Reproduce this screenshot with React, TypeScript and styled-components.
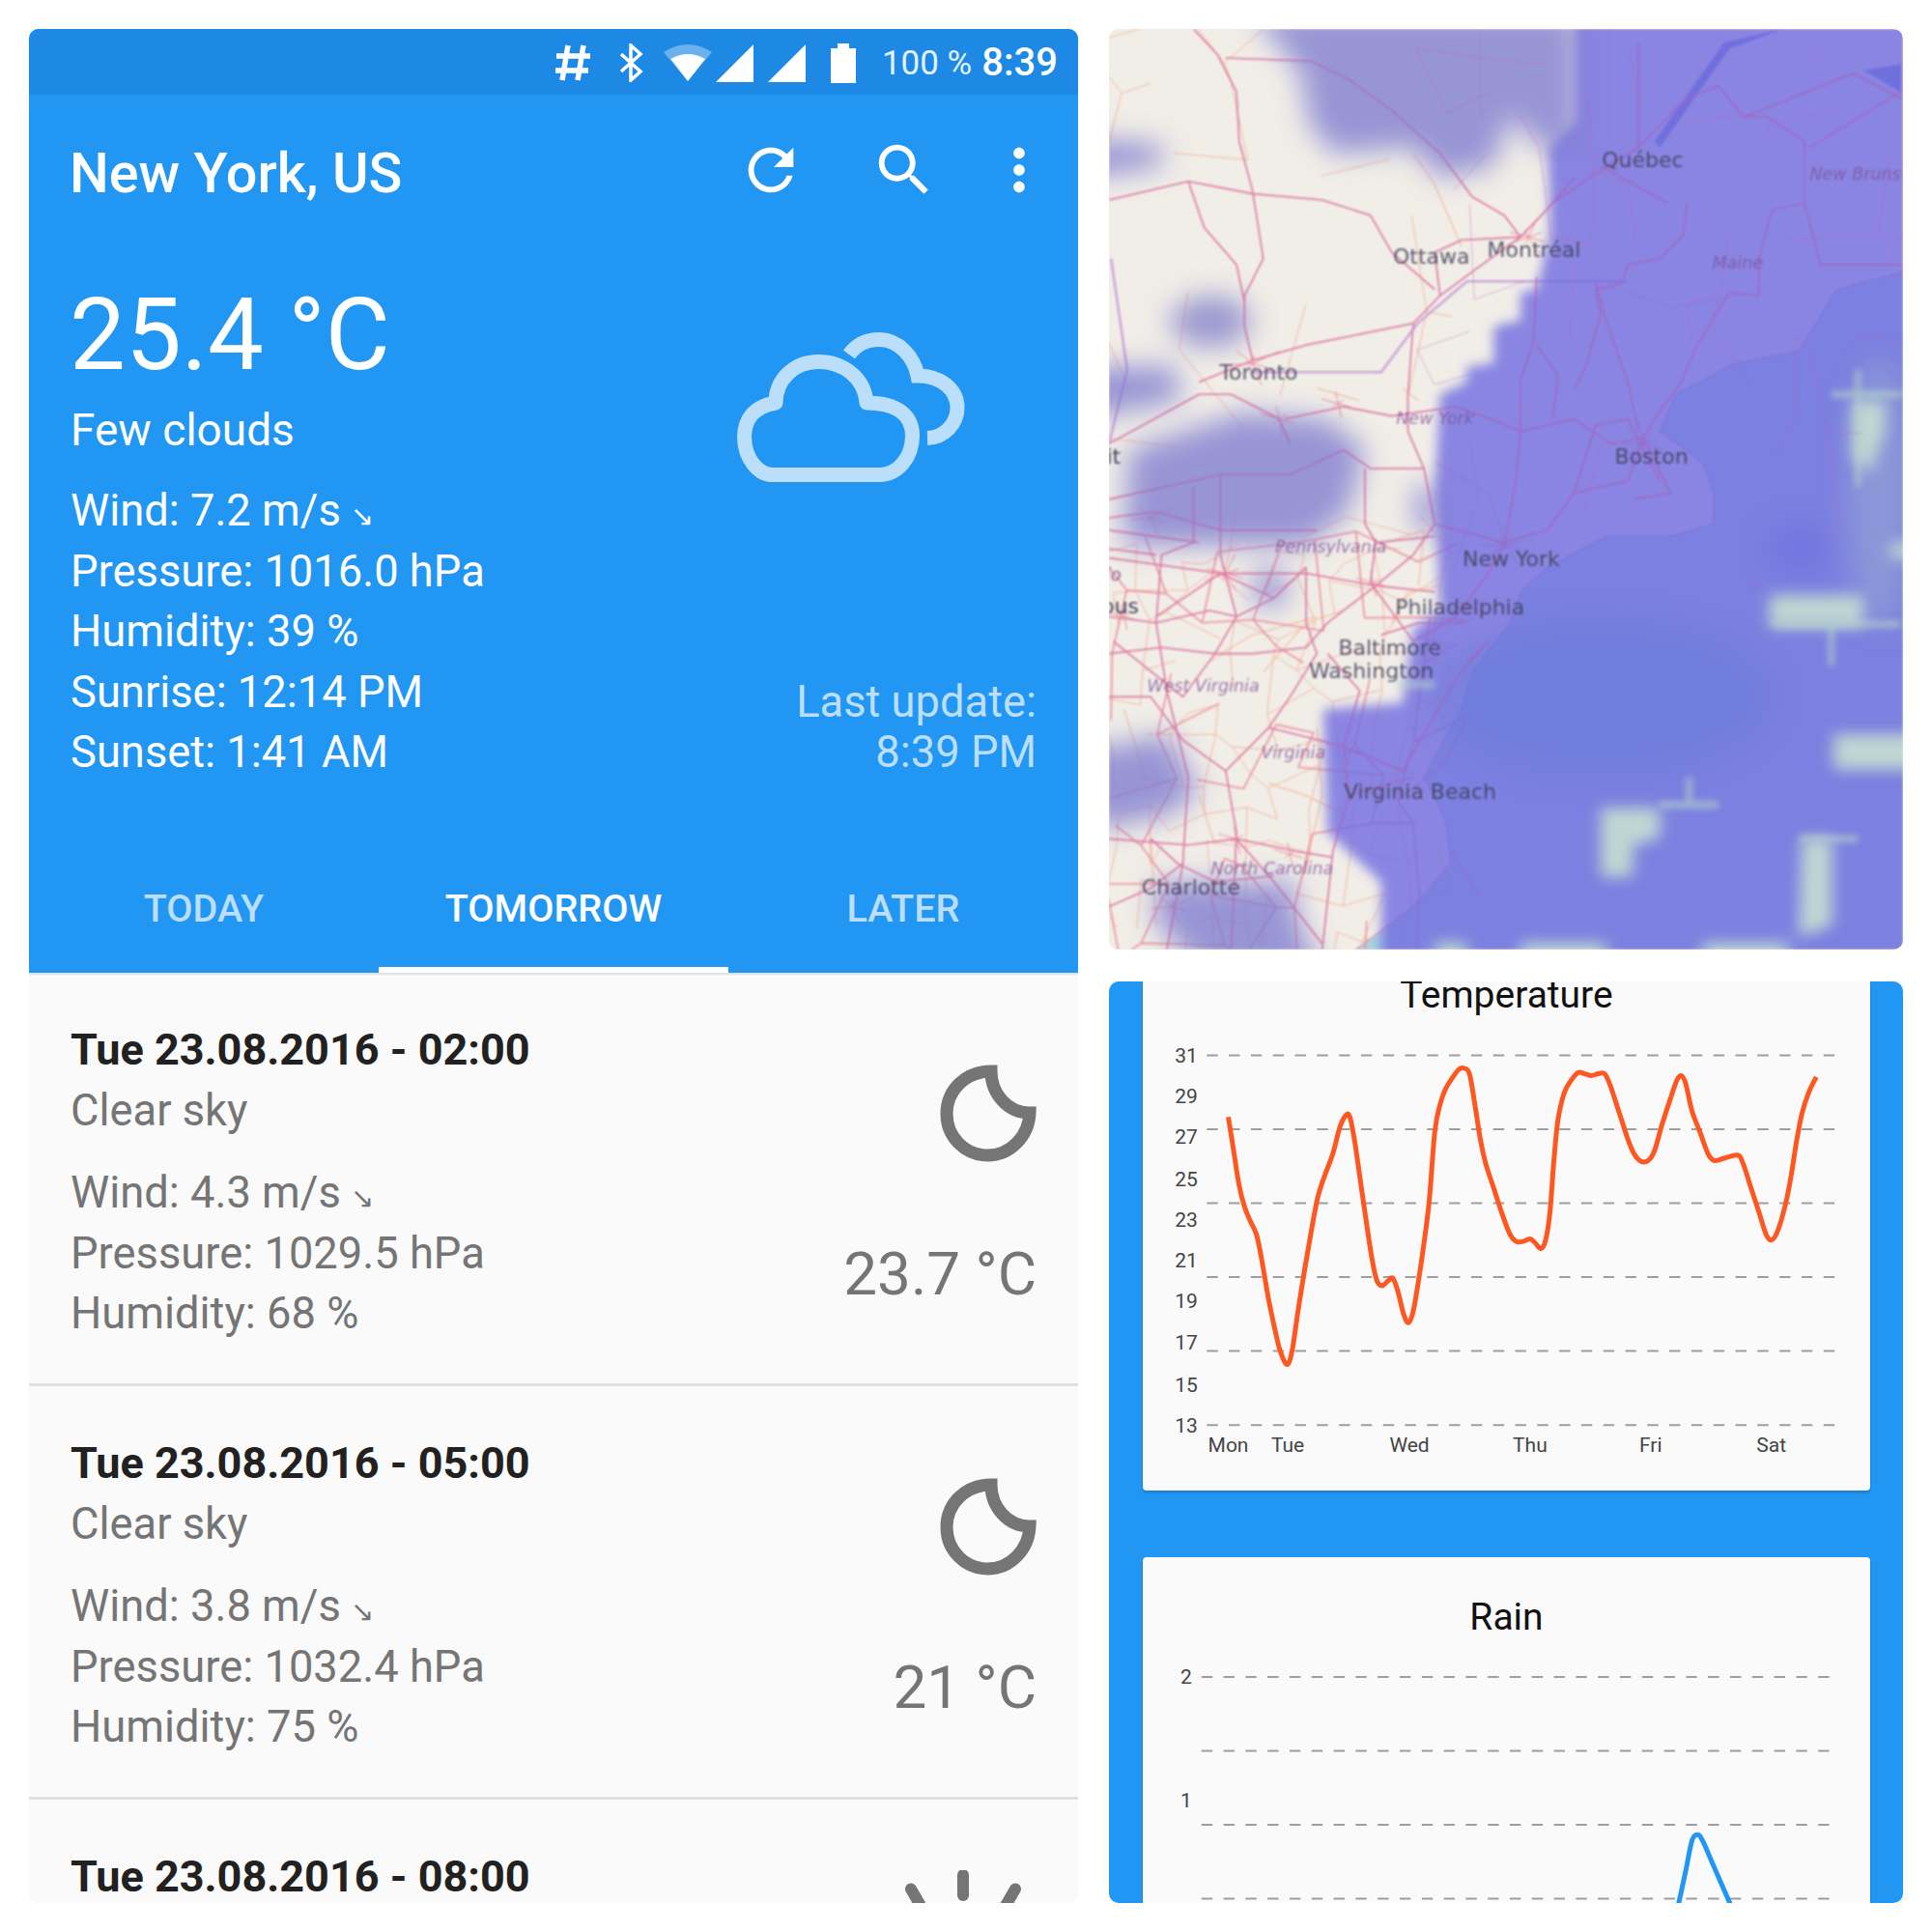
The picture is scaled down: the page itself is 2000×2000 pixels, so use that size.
import React from "react";
import styled, { createGlobalStyle } from "styled-components";

const Global = createGlobalStyle`
  html, body { margin: 0; padding: 0; background: #fff; }
  body { font-family: Roboto, "Liberation Sans", sans-serif; }
`;

const Page = styled.div`
  width: 2000px;
  height: 2000px;
  padding: 30px;
  box-sizing: border-box;
  display: grid;
  grid-template-columns: 1086px 822px;
  column-gap: 32px;
  background: #fff;
`;

const Phone = styled.section`
  height: 1940px;
  border-radius: 10px;
  overflow: hidden;
  background: #fafafa;
  display: flex;
  flex-direction: column;
`;

const Header = styled.header`
  background: #2196f3;
  color: #fff;
  flex: none;
`;

const StatusBar = styled.div`
  height: 68px;
  box-sizing: border-box;
  padding: 2px 21px 0 0;
  background: #1e88e5;
  display: flex;
  align-items: center;
  justify-content: flex-end;
`;

const StatusIcon = styled.svg<{ $gap: number }>`
  display: block;
  margin-right: ${(p) => p.$gap}px;
  fill: #fff;
  flex: none;
`;

const Battery = styled.span`
  font-size: 35px;
  color: #e3f2fd;
  margin-right: 10px;
  line-height: 1;
`;

const Clock = styled.span`
  font-size: 40px;
  font-weight: 500;
  line-height: 1;
`;

const AppBar = styled.div`
  height: 160px;
  display: flex;
  align-items: center;
  padding: 0 26px 0 42px;
`;

const Title = styled.h1`
  margin: 4px 0 0;
  font-size: 57.5px;
  font-weight: 500;
  line-height: 1;
  flex: 1;
`;

const ActionIcon = styled.svg<{ $gap: number }>`
  width: 70px;
  height: 70px;
  fill: #fff;
  display: block;
  margin: 0 0 4px ${(p) => p.$gap}px;
  flex: none;
`;

const Hero = styled.div`
  height: 613px;
  box-sizing: border-box;
  padding: 29px 43px 0;
  display: flex;
  justify-content: space-between;
`;

const Current = styled.div`
  display: flex;
  flex-direction: column;
`;

const BigTemp = styled.div`
  font-size: 103px;
  line-height: 120px;
  margin-left: -1px;
`;

const Condition = styled.div`
  font-size: 46px;
  line-height: 62px;
  margin: 7px 0 22px;
`;

const InfoLine = styled.div`
  font-size: 45.3px;
  line-height: 62.5px;
  white-space: nowrap;
`;

const Arrow = styled.span`
  font-family: "DejaVu Sans", sans-serif;
  font-size: 29px;
  line-height: 0;
  margin-left: 10px;
`;

const Side = styled.div`
  display: flex;
  flex-direction: column;
  align-items: flex-end;
`;

const CloudIcon = styled.svg`
  display: block;
  margin: 57px 74px 0 0;
`;

const Updated = styled.div`
  margin-top: 201.5px;
  color: #bbdefb;
  font-size: 45.3px;
  line-height: 52px;
  text-align: right;
`;

const Tabs = styled.nav`
  display: grid;
  grid-template-columns: repeat(3, 1fr);
  height: 136px;
`;

const Tab = styled.div<{ $active?: boolean }>`
  display: flex;
  align-items: center;
  justify-content: center;
  padding-top: 9px;
  font-size: 39.6px;
  font-weight: 500;
  color: ${(p) => (p.$active ? "#fff" : "#bbdefb")};
  border-bottom: 6px solid ${(p) => (p.$active ? "#fff" : "transparent")};
`;

const List = styled.div`
  flex: 1;
  min-height: 0;
  overflow: hidden;
  box-shadow: inset 0 3px 2px -1px #e0e0e0;
`;

const Row = styled.article`
  height: 428px;
  box-sizing: border-box;
  padding: 49px 43px 0;
  display: flex;
  justify-content: space-between;
  border-bottom: 3px solid #e0e0e0;
  color: #757575;
`;

const RowText = styled.div`
  display: flex;
  flex-direction: column;
`;

const RowTitle = styled.div`
  font-size: 45px;
  line-height: 62.5px;
  font-weight: 700;
  color: #212121;
  white-space: nowrap;
`;

const RowDesc = styled.div`
  font-size: 45.3px;
  line-height: 62.5px;
  margin-bottom: 23px;
`;

const RowSide = styled.div`
  display: flex;
  flex-direction: column;
  align-items: flex-end;
`;

const MoonIcon = styled.svg`
  display: block;
  margin-top: 46px;
`;

const SunIcon = styled.svg`
  display: block;
  margin: 24px 11px 0 0;
`;

const RowTemp = styled.div`
  font-size: 62px;
  line-height: 72px;
  margin-top: 79px;
  white-space: nowrap;
`;

const MapPanel = styled.div`
  height: 953px;
  border-radius: 10px;
  overflow: hidden;
  background: #f1eee8;
`;

const MapSvg = styled.svg`
  display: block;
  filter: blur(0.85px);
`;

const ChartsPanel = styled.div`
  height: 954px;
  margin-top: 33px;
  border-radius: 10px;
  overflow: hidden;
  background: #2196f3;
  padding: 0 34px 0 35px;
  box-sizing: border-box;
  display: flex;
  flex-direction: column;
  gap: 69px;
`;

const Card = styled.div<{ $height: number; $pad: number }>`
  flex: none;
  height: ${(p) => p.$height}px;
  padding-top: ${(p) => p.$pad}px;
  box-sizing: border-box;
  background: #fafafa;
  border-radius: 0 0 4px 4px;
  box-shadow: 0 2px 3px rgba(0, 0, 0, 0.2);
  &:last-child { border-radius: 4px; }
`;

const CardTitle = styled.div`
  font-size: 39px;
  line-height: 27px;
  padding: 1px 0 22px;
  text-align: center;
  color: #111;
`;

const ChartSvg = styled.svg`
  display: block;
  font-family: Roboto, sans-serif;
`;

const hashPaths = "M14 1 L8 37 M30 1 L24 37 M2 12 H37 M1 27 H35";

function StatusBarIcons() {
  return (
    <>
      <StatusIcon $gap={29} width={38} height={38} viewBox="0 0 38 38">
        <path d={hashPaths} stroke="#fff" strokeWidth={5.5} fill="none" />
      </StatusIcon>
      <StatusIcon $gap={21} width={25} height={40} viewBox="0 0 25 40">
        <path d="M2 11 L22 29 L12 38 V2 L22 11 L2 29" stroke="#fff" strokeWidth={3.5} fill="none" />
      </StatusIcon>
      <StatusIcon $gap={4} width={50} height={38} viewBox="0 0 50 38">
        <path d="M0 8 Q25 -8 50 8 L25 38Z" fill="#fff" opacity={0.35} />
        <path d="M7.4 15 Q25 5 43 15 L25 38Z" fill="#fff" />
      </StatusIcon>
      <StatusIcon $gap={14} width={40} height={39} viewBox="0 0 40 39">
        <path d="M0 39 L39 0 V39Z" />
      </StatusIcon>
      <StatusIcon $gap={25} width={40} height={39} viewBox="0 0 40 39">
        <path d="M0 39 L39 0 V39Z" />
      </StatusIcon>
      <StatusIcon $gap={27} width={26} height={41} viewBox="0 0 26 41">
        <path d="M7 0 H19 V5 H26 V41 H0 V5 H7Z" />
      </StatusIcon>
    </>
  );
}

const forecast = [
  { time: "Tue 23.08.2016 - 02:00", desc: "Clear sky", wind: "4.3", pressure: "1029.5", humidity: "68", temp: "23.7 °C" },
  { time: "Tue 23.08.2016 - 05:00", desc: "Clear sky", wind: "3.8", pressure: "1032.4", humidity: "75", temp: "21 °C" },
];

function Moon() {
  return (
    <MoonIcon width={100} height={102} viewBox="0 0 100 102">
      <path
        d="M53 7 C53 30 70 50 93 50 C92 74 73 94 49.5 94 C26 94 7 75 7 51 C7 27 26 7 53 7 Z"
        fill="none"
        stroke="#757575"
        strokeWidth={13}
        strokeLinejoin="miter"
        strokeMiterlimit={3}
      />
    </MoonIcon>
  );
}

function Sun() {
  return (
    <SunIcon width={130} height={60} viewBox="0 0 130 60">
      {[-30, 0, 30].map((a) => (
        <line key={a} x1={65} y1={5} x2={65} y2={26} stroke="#757575" strokeWidth={12} strokeLinecap="round" transform={`rotate(${a} 65 113)`} />
      ))}
    </SunIcon>
  );
}

// Map drawing: coordinates are taken in a stretched working space and mapped to the 822x953 tile.
const SX = 1 / 1.803;
const SY = 1 / 1.565;
const mx = (z: number) => (z - 32) * SX;
const my = (z: number) => (z - 48) * SY;

const mainRoads = [
  "M190 48 L235 90 L270 150 L275 230 L300 310 L320 420 L285 480 L285 530 L300 585",
  "M32 325 L180 295 L300 315 L430 325 L520 350 L560 410 L640 470",
  "M180 295 L210 370 L270 430 L285 490",
  "M200 620 L300 585 L400 560 L600 525 L650 480 L720 435 L800 385 L850 340 L900 290",
  "M600 525 L590 640 L590 700 L620 760 L640 850 L600 900 L530 950",
  "M32 720 L200 640 L260 640 L350 680 L370 720",
  "M360 680 L470 660 L560 675 L680 660 L760 685 L800 700 L790 790 L770 880",
  "M800 385 L770 350 L710 320 L650 250 L560 180 L480 130 L410 100 L250 95",
  "M800 385 L690 390 L640 410 L650 480",
  "M860 330 L960 270 L1020 240 L1110 160 L1170 140 L1215 190 L1260 190 L1330 230 L1330 330 L1270 340 L1245 420 L1245 480 L1190 475 L1130 560 L1100 620 L1050 680 L1030 710",
  "M950 270 L1075 330",
  "M1020 70 L1020 240",
  "M1110 330 L1105 380 L1060 420 L1000 430 L990 460 L940 470 L950 510 L920 600 L900 630",
  "M940 460 L960 520 L1000 620 L1020 700",
  "M830 450 L825 550 L800 620 L800 700",
  "M1030 710 L1000 780 L900 800 L850 860 L770 880 L740 930 L680 1000 L600 1040 L520 945",
  "M1030 710 L1080 800 L1010 810",
  "M1330 330 L1360 430 L1510 430",
  "M1340 240 L1510 150",
  "M1220 190 L1420 120 L1510 160",
  "M800 700 L900 680 L970 720 L1030 710",
  "M620 760 L520 760 L470 730 L370 770 L240 770 L32 810",
  "M510 760 L510 850 L530 880",
  "M32 840 L120 830 L240 860 L420 860",
  "M32 860 L200 880",
  "M190 790 L190 880 L130 900 L120 1010 L140 1120 L180 1260 L170 1400 L140 1540",
  "M240 770 L240 900 L270 1000 L230 1060 L170 1130 L40 1040",
  "M32 905 L240 930 L400 930 L530 950 L640 960",
  "M120 1000 L240 930 L290 950 L340 970 L400 920",
  "M32 1060 L130 1050 L230 1060 L300 1060 L400 1050 L440 1010 L530 950",
  "M400 920 L400 1010 L420 1060 L370 1130 L330 1180 L250 1250 L270 1350 L260 1540",
  "M440 1060 L500 1120 L470 1210 L480 1290 L450 1380 L430 1540",
  "M520 945 L530 880 L640 870",
  "M32 1130 L110 1130 L170 1200 L250 1250",
  "M32 1360 L180 1370 L270 1360 L380 1380 L450 1390",
  "M110 1360 L160 1400 L230 1430 L340 1420",
  "M32 1470 L110 1440 L170 1400",
  "M270 1360 L340 1430 L430 1530",
  "M330 1180 L470 1210 L580 1250 L620 1190",
  "M620 1190 L680 1100 L740 1040 L700 1075",
  "M540 1030 L610 1010 L700 1010",
  "M480 1290 L560 1270 L600 1260",
  "M32 1000 L120 1010 L220 990 L270 1000 L340 970",
  "M120 900 L32 890",
  "M640 850 L770 880",
  "M900 800 L940 690 L1000 680 L1060 780",
  "M830 560 L870 610 L860 680",
];

const minorRoads = [
  "M240 1060 L300 1030 L420 1000",
  "M320 1090 L400 1010 L470 990",
  "M110 1360 L120 1500",
  "M200 1290 L230 1370",
  "M60 1150 L100 1260",
  "M330 1270 L400 1290 L470 1320",
  "M420 1180 L430 1290 L400 1400",
  "M560 1010 L590 960 L650 950",
  "M550 880 L620 860 L610 950",
  "M580 630 L610 650",
  "M420 630 L500 650",
  "M600 250 L640 300 L690 400",
  "M990 470 L1080 500 L1200 480",
  "M640 750 L740 800 L760 850",
];

// Deterministic fine road network: jittered grid, links kept with a given probability.
function roadMesh(x0: number, x1: number, y0: number, y1: number, step: number, keep: number, seed: number) {
  let s = seed;
  const rnd = () => {
    s = (s * 16807) % 2147483647;
    return s / 2147483647;
  };
  const nx = Math.ceil((x1 - x0) / step);
  const ny = Math.ceil((y1 - y0) / step);
  const pts: [number, number][][] = [];
  for (let i = 0; i <= nx; i++) {
    pts[i] = [];
    for (let j = 0; j <= ny; j++) {
      pts[i][j] = [
        Math.round(x0 + i * step + (rnd() - 0.5) * step * 0.8),
        Math.round(y0 + j * step + (rnd() - 0.5) * step * 0.8),
      ];
    }
  }
  let d = "";
  for (let i = 0; i <= nx; i++) {
    for (let j = 0; j <= ny; j++) {
      const p = pts[i][j];
      if (i < nx && rnd() < keep) d += `M${p[0]} ${p[1]}L${pts[i + 1][j][0]} ${pts[i + 1][j][1]}`;
      if (j < ny && rnd() < keep) d += `M${p[0]} ${p[1]}L${pts[i][j + 1][0]} ${pts[i][j + 1][1]}`;
    }
  }
  return d;
}

function cityStar(x: number, y: number, r: number, n: number) {
  let d = "";
  for (let i = 0; i < n; i++) {
    const a = (i / n) * Math.PI * 2 + 0.35;
    const l = r * (0.65 + 0.35 * Math.sin(i * 2.3));
    d += `M${x} ${y}L${(x + Math.cos(a) * l * 1.5).toFixed(0)} ${(y + Math.sin(a) * l).toFixed(0)}`;
  }
  return d;
}

const meshSouth = roadMesh(32, 640, 890, 1540, 62, 0.62, 4711);
const meshSouthMajor = roadMesh(32, 640, 890, 1540, 95, 0.55, 33);
const meshNorth = roadMesh(640, 1510, 90, 880, 92, 0.28, 991);
const meshWest = roadMesh(32, 640, 60, 880, 110, 0.18, 271);
const stars = [
  [300, 590, 40, 7], [815, 385, 34, 8], [1030, 720, 38, 9], [770, 885, 42, 9], [700, 985, 28, 7],
  [640, 1040, 26, 6], [250, 930, 34, 8], [110, 840, 30, 7], [60, 1000, 24, 6], [150, 1470, 30, 7],
  [270, 1360, 28, 6], [370, 1385, 26, 6], [350, 680, 30, 6], [460, 655, 26, 6], [525, 945, 26, 6], [480, 1218, 20, 5],
]
  .map((s) => cityStar(s[0], s[1], s[2], s[3]))
  .join("");

const water = "M1520 440 L1390 470 L1320 570 L1200 590 L1090 640 L1060 700 L1140 750 L1160 800 L1160 850 L1080 870 L960 870 L850 920 L800 960 L780 1010 L710 1090 L690 1150 L620 1260 L660 1330 L670 1400 L600 1470 L460 1560 L1520 1560 Z";
const stLawrence = "M1060 240 L1190 80 L1290 48 L1180 70 L1050 230 Z";
const lakeRegions = "M1510 105 L1440 115 L1510 150 Z";

const mainCloud = "M900 20 L1560 20 L1560 1580 L540 1580 L540 1430 L440 1350 L432 1150 L580 1140 L600 1020 L650 990 L640 800 L650 640 L700 620 L700 595 L750 590 L750 530 L800 520 L800 475 L830 470 L855 380 L852 240 L900 200 Z";
const greyClouds = [
  "M300 20 L910 20 L910 240 L852 250 L780 190 L750 270 L650 290 L600 240 L450 250 L405 200 L390 120 Z",
  "M70 730 L280 670 L440 680 L510 730 L480 830 L400 885 L60 885 Z",
  "M-10 595 L155 595 L165 650 L-10 680 Z",
  "M-10 225 L130 235 L130 270 L-10 290 Z",
  "M40 1210 L140 1190 L200 1280 L150 1320 L40 1340 L-10 1340 L-10 1210 Z",
  "M120 1430 L380 1430 L380 1480 L430 1580 L220 1580 L120 1500 Z",
  "M300 930 L350 920 L370 970 L310 990 Z",
  "M600 790 L650 790 L650 860 L610 870 Z",
];
const gaps = [
  "M950 1310 L1060 1310 L1060 1360 L1010 1370 L1010 1422 L950 1422 Z",
  "M1325 1360 L1382 1360 L1382 1500 L1320 1520 Z",
  "M1265 965 L1440 965 L1440 1018 L1265 1018 Z",
  "M1385 1190 L1560 1190 L1560 1248 L1385 1248 Z",
  "M1420 650 L1480 650 L1480 700 L1450 770 L1420 740 Z",
  "M1490 880 L1560 880 L1560 905 L1490 905 Z",
  "M640 1528 L700 1528 L700 1580 L640 1580 Z",
  "M800 1528 L960 1528 L960 1580 L800 1580 Z",
  "M1140 1528 L1300 1528 L1300 1580 L1140 1580 Z",
];
const gapArms = "M1060 1305 H1170 M1115 1260 V1310 M1270 1012 H1510 M1380 1012 V1080 M1380 640 H1514 M1430 600 V790 M1320 1360 H1430 M570 1110 H640";

const cities = [
  { t: "Ottawa", x: 562, y: 428 },
  { t: "Montréal", x: 738, y: 418 },
  { t: "Québec", x: 952, y: 272 },
  { t: "Toronto", x: 238, y: 616 },
  { t: "Boston", x: 976, y: 752 },
  { t: "New York", x: 692, y: 918 },
  { t: "Philadelphia", x: 566, y: 996 },
  { t: "Baltimore", x: 460, y: 1062 },
  { t: "Washington", x: 405, y: 1100 },
  { t: "Virginia Beach", x: 470, y: 1296 },
  { t: "Charlotte", x: 93, y: 1450 },
];
const cut = [
  { t: "Detroit", x: 54, y: 752, city: true },
  { t: "Columbus", x: 88, y: 995, city: true },
  { t: "Ohio", x: 55, y: 942, city: false },
];
const regions = [
  { t: "New Brunswick", x: 1340, y: 292 },
  { t: "Maine", x: 1158, y: 436 },
  { t: "New York", x: 568, y: 688 },
  { t: "Pennsylvania", x: 342, y: 896 },
  { t: "West Virginia", x: 103, y: 1122 },
  { t: "Virginia", x: 316, y: 1230 },
  { t: "North Carolina", x: 222, y: 1418 },
];

function WeatherMap() {
  const zoomSpace = `scale(${SX} ${SY}) translate(-32 -48)`;
  return (
    <MapSvg width={822} height={953} viewBox="0 0 822 953" fontFamily="'DejaVu Sans', sans-serif">
      <defs>
        <filter id="wide" filterUnits="userSpaceOnUse" x="-200" y="-200" width="2200" height="2200">
          <feGaussianBlur stdDeviation="26 22" />
        </filter>
        <filter id="soft" filterUnits="userSpaceOnUse" x="-200" y="-200" width="2200" height="2200">
          <feGaussianBlur stdDeviation="11 9" />
        </filter>
        <filter id="softer" filterUnits="userSpaceOnUse" x="-200" y="-200" width="2200" height="2200">
          <feGaussianBlur stdDeviation="14 12" />
        </filter>
        <filter id="thin" filterUnits="userSpaceOnUse" x="-200" y="-200" width="2200" height="2200">
          <feGaussianBlur stdDeviation="6 5" />
        </filter>
      </defs>
      <rect width={822} height={953} fill="#f1eee8" />
      <g transform={zoomSpace}>
        <path d={water} fill="#aad3df" />
        <path d={stLawrence} fill="#6f7fd8" />
        <path d={lakeRegions} fill="#6f7fd8" />
        <path d={water} fill="none" stroke="#c06fc0" strokeWidth={1.5} vectorEffect="non-scaling-stroke" opacity={0.5} />
        <g fill="none" stroke="#f4b79f" strokeWidth={1}>
          <path d={meshSouth} vectorEffect="non-scaling-stroke" />
          <path d={meshWest} vectorEffect="non-scaling-stroke" />
        </g>
        <g fill="none" stroke="#f3bd9a" strokeWidth={1.2}>
          {minorRoads.map((d) => (
            <path key={d} d={d} vectorEffect="non-scaling-stroke" />
          ))}
        </g>
        <g fill="none" stroke="#ee8f9a" strokeWidth={1.6} strokeLinejoin="round">
          {mainRoads.map((d) => (
            <path key={d} d={d} vectorEffect="non-scaling-stroke" />
          ))}
          <path d={stars} strokeWidth={1} vectorEffect="non-scaling-stroke" />
          <path d={meshSouthMajor} vectorEffect="non-scaling-stroke" />
        </g>
        <path d="M295 604 H540 L608 525 L700 457 H1000" fill="none" stroke="#cda4d8" strokeWidth={2.5} vectorEffect="non-scaling-stroke" />
        <path d="M36 420 L66 600 L32 720" fill="none" stroke="#cda4d8" strokeWidth={2.5} vectorEffect="non-scaling-stroke" />
        <g filter="url(#soft)">
          <path d={mainCloud} fill="#6f6be0" opacity={0.8} />
        </g>
        <g filter="url(#wide)">
          {greyClouds.map((d) => (
            <path key={d} d={d} fill="#7f7cd0" opacity={0.78} />
          ))}
          <ellipse cx={222} cy={522} rx={75} ry={42} fill="#7f7cc8" opacity={0.75} />
          <ellipse cx={1320} cy={890} rx={60} ry={40} fill="#6a6cde" opacity={0.5} />
          <ellipse cx={1470} cy={800} rx={60} ry={220} fill="#a8c4cc" opacity={0.35} />
          <ellipse cx={950} cy={1130} rx={320} ry={130} fill="#5f78d6" opacity={0.35} />
        </g>
        <g filter="url(#softer)">
          {gaps.map((d) => (
            <path key={d} d={d} fill="#c6e0d0" opacity={0.9} />
          ))}
        </g>
        <g filter="url(#thin)">
          <path d={gapArms} fill="none" stroke="#b6d6cc" strokeWidth={12} opacity={0.6} />
        </g>
        <g fill="none" stroke="#c45fb6" strokeWidth={1.5} opacity={0.42}>
          {mainRoads.map((d) => (
            <path key={d} d={d} vectorEffect="non-scaling-stroke" />
          ))}
          <path d={meshNorth} strokeWidth={1} vectorEffect="non-scaling-stroke" />
        </g>
      </g>
      {cities.map((c) => (
        <text key={c.t} x={mx(c.x)} y={my(c.y)} fontSize={22} fill="#3f3f5a" opacity={0.85}>
          {c.t}
        </text>
      ))}
      {cut.map((c) => (
        <text
          key={c.t}
          x={mx(c.x)}
          y={my(c.y)}
          textAnchor="end"
          fontSize={c.city ? 22 : 18}
          fontStyle={c.city ? "normal" : "italic"}
          fill={c.city ? "#3f3f5a" : "#8a5a9a"}
        >
          {c.t}
        </text>
      ))}
      {regions.map((c) => (
        <text key={c.t + c.x} x={mx(c.x)} y={my(c.y)} fontSize={17.5} fontStyle="italic" fill="#7f4f96" opacity={0.75}>
          {c.t}
        </text>
      ))}
    </MapSvg>
  );
}

const tempPoints: [number, number][] = [
  [255, 245], [265, 300], [275, 355], [285, 390], [295, 412], [308, 437], [318, 480], [330, 540], [342, 590], [352, 625],
  [365, 647], [375, 620], [385, 560], [398, 490], [410, 430], [422, 375], [435, 340], [450, 305], [462, 265], [472, 245],
  [481, 243], [490, 280], [500, 340], [510, 400], [522, 470], [532, 510], [542, 519], [552, 512], [562, 507], [572, 530],
  [582, 565], [591, 579], [600, 560], [610, 510], [620, 450], [630, 380], [640, 270], [650, 225], [660, 200], [672, 183],
  [685, 168], [695, 166], [705, 175], [715, 225], [725, 280], [735, 320], [750, 360], [765, 400], [780, 435], [792, 447],
  [805, 447], [818, 443], [828, 450], [838, 459], [847, 445], [855, 400], [862, 320], [870, 250], [882, 205], [895, 185],
  [908, 173], [920, 175], [932, 178], [945, 175], [957, 175], [968, 195], [985, 240], [1000, 280], [1012, 305], [1025, 317],
  [1038, 316], [1050, 300], [1065, 255], [1080, 215], [1092, 185], [1100, 178], [1108, 190], [1120, 235], [1135, 270], [1150, 305],
  [1162, 316], [1180, 312], [1205, 307], [1215, 320], [1230, 360], [1245, 400], [1258, 435], [1268, 445], [1280, 430], [1295, 385],
  [1305, 340], [1315, 285], [1325, 240], [1338, 205], [1352, 180],
];
const rainPoints: [number, number][] = [[1095, 1522], [1108, 1470], [1120, 1420], [1130, 1410], [1140, 1420], [1160, 1460], [1192, 1524]];

const cx = (z: number) => z / 1.802 - 53;
const tempY = (z: number) => z / 1.568 - 66;
const rainY = (z: number) => z / 1.568 - 710;

function smooth(points: [number, number][]) {
  let d = `M${points[0][0]} ${points[0][1]}`;
  for (let i = 0; i < points.length - 1; i++) {
    const p0 = points[Math.max(i - 1, 0)];
    const p1 = points[i];
    const p2 = points[i + 1];
    const p3 = points[Math.min(i + 2, points.length - 1)];
    d += ` C${(p1[0] + (p2[0] - p0[0]) / 6).toFixed(1)} ${(p1[1] + (p2[1] - p0[1]) / 6).toFixed(1)} ${(p2[0] - (p3[0] - p1[0]) / 6).toFixed(1)} ${(p2[1] - (p3[1] - p1[1]) / 6).toFixed(1)} ${p2[0]} ${p2[1]}`;
  }
  return d;
}

const toChart = (pts: [number, number][], fy: (z: number) => number): [number, number][] =>
  pts.map(([x, y]) => [+cx(x).toFixed(1), +fy(y).toFixed(1)]);

const tempTicks: [string, number][] = [["31", 145], ["29", 211], ["27", 276], ["25", 346], ["23", 411], ["21", 477], ["19", 544], ["17", 610], ["15", 679], ["13", 745]];
const days: [string, number][] = [["Mon", 255], ["Tue", 366], ["Wed", 593], ["Thu", 818], ["Fri", 1043], ["Sat", 1268]];

function TempChart() {
  return (
    <ChartSvg width={753} height={477} viewBox="0 0 753 477">
      {[145, 265, 385, 505, 625, 745].map((y) => (
        <line key={y} x1={cx(215)} x2={cx(1390)} y1={tempY(y)} y2={tempY(y)} stroke="#9e9e9e" strokeWidth={2} strokeDasharray="11.4 11.4" />
      ))}
      {tempTicks.map(([t, y]) => (
        <text key={t} x={cx(198)} y={tempY(y) + 7.5} textAnchor="end" fontSize={21} fill="#444">{t}</text>
      ))}
      {days.map(([t, x]) => (
        <text key={t} x={cx(x)} y={tempY(778) + 6.5} textAnchor="middle" fontSize={21} fill="#444">{t}</text>
      ))}
      <path d={smooth(toChart(tempPoints, tempY))} fill="none" stroke="#ff5722" strokeWidth={5} strokeLinejoin="round" />
    </ChartSvg>
  );
}

function RainChart() {
  return (
    <ChartSvg width={753} height={260} viewBox="0 0 753 260">
      {[1154, 1274, 1394, 1514].map((y) => (
        <line key={y} x1={cx(205)} x2={cx(1380)} y1={rainY(y)} y2={rainY(y)} stroke="#9e9e9e" strokeWidth={2} strokeDasharray="11.4 11.4" />
      ))}
      <text x={cx(187)} y={rainY(1154) + 7.5} textAnchor="end" fontSize={21} fill="#444">2</text>
      <text x={cx(187)} y={rainY(1354) + 7.5} textAnchor="end" fontSize={21} fill="#444">1</text>
      <path d={smooth(toChart(rainPoints, rainY))} fill="none" stroke="#2196f3" strokeWidth={5} strokeLinejoin="round" />
    </ChartSvg>
  );
}

export default function App() {
  return (
    <Page>
      <Global />
      <Phone>
        <Header>
          <StatusBar>
            <StatusBarIcons />
            <Battery>100 %</Battery>
            <Clock>8:39</Clock>
          </StatusBar>
          <AppBar>
            <Title>New York, US</Title>
            <ActionIcon $gap={0} viewBox="0 0 24 24">
              <path d="M17.65 6.35C16.2 4.9 14.21 4 12 4c-4.42 0-7.99 3.58-7.99 8s3.57 8 7.99 8c3.73 0 6.84-2.55 7.73-6h-2.08c-.82 2.33-3.04 4-5.65 4-3.31 0-6-2.69-6-6s2.69-6 6-6c1.66 0 3.14.69 4.22 1.78L13 11h7V4l-2.35 2.35z" />
            </ActionIcon>
            <ActionIcon $gap={68.5} viewBox="0 0 24 24">
              <path d="M15.5 14h-.79l-.28-.27C15.41 12.59 16 11.11 16 9.5 16 5.91 13.09 3 9.5 3S3 5.91 3 9.5 5.91 16 9.5 16c1.61 0 3.09-.59 4.23-1.57l.27.28v.79l5 4.99L20.49 19l-4.99-5zm-6 0C7.01 14 5 11.99 5 9.5S7.01 5 9.5 5 14 7.01 14 9.5 11.99 14 9.5 14z" />
            </ActionIcon>
            <ActionIcon $gap={49} viewBox="0 0 24 24">
              <path d="M12 8c1.1 0 2-.9 2-2s-.9-2-2-2-2 .9-2 2 .9 2 2 2zm0 2c-1.1 0-2 .9-2 2s.9 2 2 2 2-.9 2-2-.9-2-2-2zm0 6c-1.1 0-2 .9-2 2s.9 2 2 2 2-.9 2-2-.9-2-2-2z" />
            </ActionIcon>
          </AppBar>
          <Hero>
            <Current>
              <BigTemp>25.4 °C</BigTemp>
              <Condition>Few clouds</Condition>
              <InfoLine>Wind: 7.2 m/s<Arrow>↘</Arrow></InfoLine>
              <InfoLine>Pressure: 1016.0 hPa</InfoLine>
              <InfoLine>Humidity: 39 %</InfoLine>
              <InfoLine>Sunrise: 12:14 PM</InfoLine>
              <InfoLine>Sunset: 1:41 AM</InfoLine>
            </Current>
            <Side>
              <CloudIcon width={236} height={155} viewBox="763 343 236 155">
                <g fill="none" stroke="#bbdefb" strokeWidth={15}>
                  <path d="M800 490.5 H910 C930 490.5 944.5 472 944.5 450 C944.5 430 930 416 897 416 C895 390 873 373.5 847 373.5 C822 373.5 803 392 803 416 C780 420 770.5 433 770.5 452 C771 474 785 490.5 800 490.5 Z" strokeLinejoin="round" />
                  <path d="M879 366 C887 355 898 350.5 910 350.5 C930 350.5 946 368 950 388 C975 388 991 403 991 421 C991 438 977 452 960 452.5" />
                </g>
              </CloudIcon>
              <Updated>Last update:<br />8:39 PM</Updated>
            </Side>
          </Hero>
          <Tabs>
            <Tab>TODAY</Tab>
            <Tab $active>TOMORROW</Tab>
            <Tab>LATER</Tab>
          </Tabs>
        </Header>
        <List>
          {forecast.map((f) => (
            <Row key={f.time}>
              <RowText>
                <RowTitle>{f.time}</RowTitle>
                <RowDesc>{f.desc}</RowDesc>
                <InfoLine>Wind: {f.wind} m/s<Arrow>↘</Arrow></InfoLine>
                <InfoLine>Pressure: {f.pressure} hPa</InfoLine>
                <InfoLine>Humidity: {f.humidity} %</InfoLine>
              </RowText>
              <RowSide>
                <Moon />
                <RowTemp>{f.temp}</RowTemp>
              </RowSide>
            </Row>
          ))}
          <Row>
            <RowText>
              <RowTitle>Tue 23.08.2016 - 08:00</RowTitle>
            </RowText>
            <RowSide>
              <Sun />
            </RowSide>
          </Row>
        </List>
      </Phone>
      <div>
        <MapPanel>
          <WeatherMap />
        </MapPanel>
        <ChartsPanel>
          <Card $height={527} $pad={0}>
            <CardTitle>Temperature</CardTitle>
            <TempChart />
          </Card>
          <Card $height={500} $pad={48}>
            <CardTitle>Rain</CardTitle>
            <RainChart />
          </Card>
        </ChartsPanel>
      </div>
    </Page>
  );
}
